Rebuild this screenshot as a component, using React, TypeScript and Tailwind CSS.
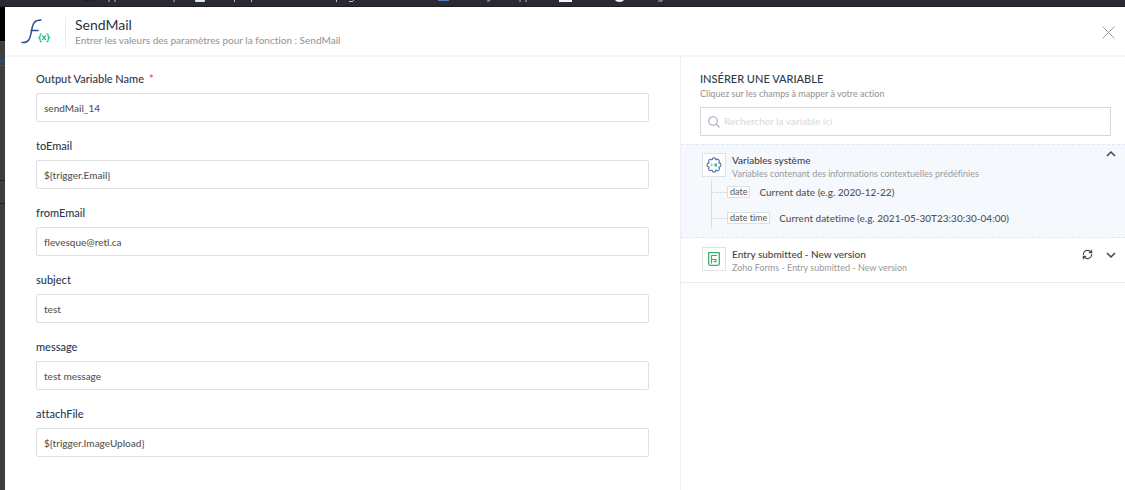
import { useState, type ReactNode } from "react";
import { RefreshCw } from "lucide-react";

type Field = { id: string; label: string; value: string; required?: boolean };

const fields: Field[] = [
  { id: "output", label: "Output Variable Name", value: "sendMail_14", required: true },
  { id: "toEmail", label: "toEmail", value: "${trigger.Email}" },
  { id: "fromEmail", label: "fromEmail", value: "flevesque@retl.ca" },
  { id: "subject", label: "subject", value: "test" },
  { id: "message", label: "message", value: "test message" },
  { id: "attachFile", label: "attachFile", value: "${trigger.ImageUpload}" },
];

const systemVariables = [
  { type: "date", text: "Current date (e.g. 2020-12-22)" },
  { type: "date time", text: "Current datetime (e.g. 2021-05-30T23:30:30-04:00)" },
];

function BookmarksEdge() {
  return (
    <div className="h-[7px] shrink-0 overflow-hidden border-b border-[#1c1b22] bg-[#2b2a33]" aria-hidden="true">
      <svg width="700" height="6" viewBox="0 0 700 6">
        <path d="M84 0h11v1H84z" fill="#20201f" />
        <path d="M195 0h10v1a1 1 0 0 1-1 1h-8a1 1 0 0 1-1-1z" fill="#d5eee9" />
        <path d="M438 0h11v1h-11z" fill="#4f7fc0" />
        <path d="M559 0h13v2h-13z" fill="#f5f5f5" />
        <path d="M615 0h9q-1 2-4.500 2t-4.500-2z" fill="#f0f0f0" />
        <path
          d="M109 0v2M115 0v2M174 0v2M234.500 0v2M251.500 0v2M336.500 0v2M520 0v2M526 0v2M353 1.500h-4M353.500 0v1M490 0l-1 1h-2M662 0v1h-4"
          fill="none"
          stroke="#b9b9bf"
        />
      </svg>
    </div>
  );
}

function FunctionLogo() {
  return (
    <svg width="30" height="28" viewBox="0 0 30 28" fill="none" strokeLinecap="round" aria-hidden="true">
      <path d="M1 24.500c6.500.5 8.200-3.500 9.500-11.500S13.500 2 20 2M10 12.500h7" stroke="#2f4f91" strokeWidth="1.500" />
      <path
        d="M20.300 15.800c-1.200 0-1.200.7-1.200 2 0 1.200-.2 1.700-1 2 .8.3 1 .8 1 2 0 1.300 0 2 1.200 2M26 15.800c1.200 0 1.200.7 1.200 2 0 1.200.2 1.700 1 2-.8.3-1 .8-1 2 0 1.300 0 2-1.200 2M21.600 18l3 3.600M24.600 18l-3 3.600"
        stroke="#22bb94"
        strokeWidth="1.300"
      />
    </svg>
  );
}

function GearIcon() {
  return (
    <svg width="16" height="16" viewBox="0 0 16 16" fill="none" aria-hidden="true">
      <path
        d="M6.300 2.600a1.700 1.700 0 0 1 3.400 0l.5.300a1.600 1.600 0 0 1 2.700 2.500l.2.700a1.600 1.600 0 0 1 0 3.800l-.2.700a1.600 1.600 0 0 1-2.700 2.500l-.5.300a1.700 1.700 0 0 1-3.400 0l-.5-.3a1.600 1.600 0 0 1-2.700-2.500l-.2-.7a1.600 1.600 0 0 1 0-3.800l.2-.7a1.600 1.600 0 0 1 2.700-2.500z"
        stroke="#4f70ad"
        strokeWidth="1.100"
        strokeLinejoin="round"
      />
      <path d="M4.500 8h3M5.500 6.800v2.400" stroke="#7fd6c0" strokeWidth="1" />
      <path d="M8.500 6.500H11v3H8.500z" fill="#2dbf9b" />
    </svg>
  );
}

function FormsIcon() {
  return (
    <svg width="12" height="14" viewBox="0 0 12 14" fill="none" stroke="#35b070" strokeWidth="1.300" strokeLinejoin="round" aria-hidden="true">
      <path d="M2.200 13.300A1.500 1.500 0 0 1 .7 11.800V.7h10.600v11.100a1.500 1.500 0 0 1-1.500 1.500z" />
      <path d="M3.500 11.500V3.500h5.500M3.500 7.500h4.500v2.200H5.500" strokeWidth="1.200" />
    </svg>
  );
}

function Chevron({ up }: { up?: boolean }) {
  return (
    <svg width="10" height="6" viewBox="0 0 10 6" fill="none" stroke="#454545" strokeWidth="1.500" aria-hidden="true">
      <path d={up ? "M1 5l4-4 4 4" : "M1 1l4 4 4-4"} />
    </svg>
  );
}

function SourceHeading({ icon, title, note }: { icon: ReactNode; title: string; note: string }) {
  return (
    <div className="flex flex-1 items-start gap-[6px] pt-[2px]">
      <div className="flex size-6 shrink-0 items-center justify-center border border-[#dfe1e4] bg-white">{icon}</div>
      <div>
        <h3 className="text-[10px] leading-[14px] font-medium text-[#444]">{title}</h3>
        <p className="text-[9px] leading-[13px] text-[#999]">{note}</p>
      </div>
    </div>
  );
}

export default function App() {
  const [query, setQuery] = useState("");
  return (
    <div className="flex min-h-screen flex-col bg-white font-['Lato',sans-serif] text-[#555] [font-variant-ligatures:none]">
      <BookmarksEdge />
      <div className="flex flex-1">
        <div className="flex w-[5px] shrink-0 flex-col bg-[#3c3e3f]" aria-hidden="true">
          <div className="h-[34px] bg-black" />
          <div className="h-px bg-[#1d5a4c]" />
          <div className="mt-[13px] h-[11px] border-b border-[#245a92] text-[6px] leading-[11px] font-bold text-[#245a92]">
            N
          </div>
          <div className="mt-[114px] h-px bg-[#222]" />
          <div className="mt-[22px] h-px bg-[#222]" />
        </div>
        <div className="flex min-w-0 flex-1 flex-col">
          <header className="flex h-[50px] items-center border-b-2 border-[#f5f5f6] pt-[2px] pr-[10px] pl-4">
            <FunctionLogo />
            <div className="ml-[14px] h-[30px] w-px bg-[#e9eaf3]" />
            <div className="ml-[9px] flex-1">
              <h1 className="text-[14px] leading-[17px] text-[#2b3445]">SendMail</h1>
              <p className="text-[10px] leading-[15px] font-medium text-[#999]">
                Entrer les valeurs des paramètres pour la fonction : SendMail
              </p>
            </div>
            <button type="button" aria-label="Fermer">
              <svg width="13" height="13" viewBox="0 0 13 13" stroke="#9a9da2" fill="none" aria-hidden="true">
                <path d="M.5.500l12 12M12.500.500l-12 12" />
              </svg>
            </button>
          </header>
          <div className="flex flex-1">
            <form className="flex min-w-0 flex-1 flex-col gap-4 pt-[14px] pr-[31px] pl-[31px]">
              {fields.map((f) => (
                <div key={f.id} className="flex flex-col gap-[6px]">
                  <label htmlFor={f.id} className="text-[11px] leading-4 font-medium text-[#2e3a50]">
                    {f.label}
                    {f.required && <span className="ml-[5px] text-[#f33]">*</span>}
                  </label>
                  <input
                    id={f.id}
                    defaultValue={f.value}
                    className="h-[29px] w-full rounded-[2px] border border-[#e0e0e0] px-[7px] text-[10px] font-medium text-[#555] outline-none"
                  />
                </div>
              ))}
            </form>
            <aside className="w-[445px] shrink-0 border-l border-[#eeeef0]">
              <div className="pt-[14px] pr-[14px] pb-2 pl-[19px]">
                <h2 className="text-[11px] leading-4 font-medium text-[#2e3a50]">INSÉRER UNE VARIABLE</h2>
                <p className="text-[9px] leading-[13px] font-medium text-[#999]">
                  Cliquez sur les champs à mapper à votre action
                </p>
                <label className="mt-[7px] flex h-[29px] items-center gap-[4px] border border-[#d8d8d8] px-[7px]">
                  <svg width="12" height="12" viewBox="0 0 12 12" fill="none" stroke="#a4adc2" strokeWidth="1.100" aria-hidden="true">
                    <circle cx="5" cy="5" r="4.300" />
                    <path d="M8.200 8.200l3.300 3.300" />
                  </svg>
                  <input
                    type="search"
                    aria-label="Rechercher la variable ici"
                    placeholder="Rechercher la variable ici"
                    value={query}
                    onChange={(e) => setQuery(e.target.value)}
                    className="min-w-0 flex-1 text-[10px] font-medium outline-none placeholder:text-[#dcdcdc]"
                  />
                </label>
              </div>
              <section className="border-y border-dashed border-[#dce7f7] bg-[#f5f9fe] pt-[6px] pr-[9px] pb-2 pl-[21px]">
                <div className="flex items-start">
                  <SourceHeading
                    icon={<GearIcon />}
                    title="Variables système"
                    note="Variables contenant des informations contextuelles prédéfinies"
                  />
                  <button type="button" aria-label="Réduire">
                    <Chevron up />
                  </button>
                </div>
                <ul className="ml-[9px] flex flex-col gap-[10px] border-l border-[#dedede] pt-1 pb-[3px]">
                  {systemVariables.map((v) => (
                    <li key={v.type} className="flex items-center">
                      <span className="w-[15px] border-t border-dashed border-[#dcdcdc]" />
                      <span className="border border-[#dfdfdf] bg-[#fdfdfd] px-[2px] text-[9px] leading-[10px]">{v.type}</span>
                      <button type="button" className="ml-[9px] text-[10px] leading-4 font-medium">
                        {v.text}
                      </button>
                    </li>
                  ))}
                </ul>
              </section>
              <section className="flex items-center border-b border-[#ececec] pt-[7px] pr-[9px] pb-2 pl-[21px]">
                <SourceHeading
                  icon={<FormsIcon />}
                  title="Entry submitted - New version"
                  note="Zoho Forms - Entry submitted - New version"
                />
                <div className="flex items-center gap-[13px] self-start py-1">
                  <button type="button" aria-label="Actualiser">
                    <RefreshCw size={11} strokeWidth={2.5} color="#454545" />
                  </button>
                  <button type="button" aria-label="Développer">
                    <Chevron />
                  </button>
                </div>
              </section>
            </aside>
          </div>
        </div>
      </div>
    </div>
  );
}
